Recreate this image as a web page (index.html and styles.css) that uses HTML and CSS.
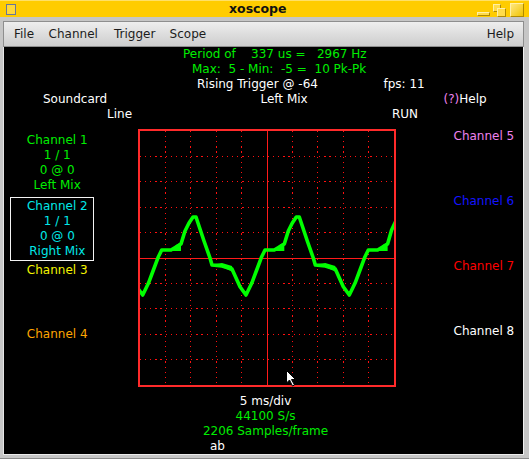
FILE: index.html
```html
<!DOCTYPE html>
<html>
<head>
<meta charset="utf-8">
<link rel="stylesheet" href="styles.css">
</head>
<body>
<div class="window">
  <div class="titlebar">
    <div class="menu-icon"></div>
    <div class="title">xoscope</div>
    <div class="tb-min"></div>
    <div class="tb-max"><span class="sq sq1"></span><span class="sq sq2"></span></div>
    <div class="tb-close"></div>
  </div>
  <div class="frame">
    <div class="menubar">
      <span class="mi">File</span>
      <span class="mi">Channel</span>
      <span class="mi">Trigger</span>
      <span class="mi">Scope</span>
      <span class="mi">Help</span>
    </div>
    <div class="screen">
      <div class="header">
        <div class="hl l1 green">Period of    337 us =   2967 Hz</div>
        <div class="hl l2 green">Max:  5 - Min:  -5 =  10 Pk-Pk</div>
        <div class="hl l3"><span>Rising Trigger @ -64</span><span>fps: 11</span></div>
        <div class="hl l4"><span>Soundcard</span><span>Left Mix</span><span><span class="violet">(?)</span>Help</span></div>
        <div class="hl l5"><span>Line</span><span>RUN</span></div>
      </div>
      <div class="main">
        <div class="left">
          <div class="chgroup green">
            <div>Channel 1</div><div>1 / 1</div><div>0 @ 0</div><div>Left Mix</div>
          </div>
          <div class="chbox cyan">
            <div>Channel 2</div><div>1 / 1</div><div>0 @ 0</div><div>Right Mix</div>
          </div>
          <div class="ch3 yellow">Channel 3</div>
          <div class="ch4 orange">Channel 4</div>
        </div>
        <div class="graph">
          <svg class="scope" width="258" height="258" viewBox="0 0 258 258">
            <defs>
              <clipPath id="inner"><rect x="2" y="2" width="254" height="254"/></clipPath>
            </defs>
            <g stroke="#ff1010" stroke-width="1" stroke-dasharray="1.2 3.92" shape-rendering="crispEdges">
              <line x1="2" y1="27.5" x2="257" y2="27.5"/>
              <line x1="2" y1="52.5" x2="257" y2="52.5"/>
              <line x1="2" y1="78.5" x2="257" y2="78.5"/>
              <line x1="2" y1="103.5" x2="257" y2="103.5"/>
              <line x1="2" y1="154.5" x2="257" y2="154.5"/>
              <line x1="2" y1="179.5" x2="257" y2="179.5"/>
              <line x1="2" y1="205.5" x2="257" y2="205.5"/>
              <line x1="2" y1="230.5" x2="257" y2="230.5"/>
              <line y1="2" x1="27.5" y2="257" x2="27.5"/>
              <line y1="2" x1="52.5" y2="257" x2="52.5"/>
              <line y1="2" x1="78.5" y2="257" x2="78.5"/>
              <line y1="2" x1="103.5" y2="257" x2="103.5"/>
              <line y1="2" x1="154.5" y2="257" x2="154.5"/>
              <line y1="2" x1="179.5" y2="257" x2="179.5"/>
              <line y1="2" x1="205.5" y2="257" x2="205.5"/>
              <line y1="2" x1="230.5" y2="257" x2="230.5"/>
            </g>
            <g stroke="#ff1a1a" stroke-width="1" shape-rendering="crispEdges">
              <line x1="2" y1="129.5" x2="256" y2="129.5"/>
              <line x1="129.5" y1="2" x2="129.5" y2="256"/>
            </g>
            <g clip-path="url(#inner)">
              <polyline fill="none" stroke="#00ff00" stroke-width="3.6" stroke-linejoin="round"
                points="-1.3,157.7 4.7,166 10.4,154.3 15.4,141 20.4,127.7 23.7,121
                24,121 33,121 38,118 43,115 47,102 51,94 55,88 58,88 62,100 66,112 72,129 74,136 84,137 94,140 102,157.7 108,166 113.7,154.3 118.7,141 123.7,127.7 127,121
                136.3,121 141.3,118 146.3,115 150.3,102 154.3,94 158.3,88 161.3,88 165.3,100 169.3,112 175.3,129 177.3,136 187.3,137 197.3,140 205.3,157.7 211.3,166 217,154.3 222,141 227,127.7 230.3,121
                239.6,121 244.6,118 249.6,115 253.6,101 256.9,94 260,88"/>
              <polygon fill="#00ff00" points="33,122 43,122 43,113 38,116"/>
              <polygon fill="#00ff00" points="136.3,122 146.3,122 146.3,113 141.3,116"/>
              <polygon fill="#00ff00" points="239.6,122 249.6,122 249.6,113 244.6,116"/>
              <polygon fill="#00ff00" points="76,135 84,134 94,137 95,143 86,139"/>
              <polygon fill="#00ff00" points="179.3,135 187.3,134 197.3,137 198.3,143 189.3,139"/>
            </g>
            <rect x="1" y="1" width="256" height="256" fill="none" stroke="#ff2a2a" stroke-width="2"/>
          </svg>
          <svg class="cursor" width="11" height="17" viewBox="0 0 11 17">
            <path d="M0.5 0.5 V13 L3.5 10 L6.5 16 L8.5 15 L5.5 9.5 H9.5 Z" fill="#fff" stroke="#000" stroke-width="1"/>
          </svg>
        </div>
        <div class="right">
          <div class="rch violet">Channel 5</div>
          <div class="rch blue">Channel 6</div>
          <div class="rch red">Channel 7</div>
          <div class="rch white">Channel 8</div>
        </div>
      </div>
      <div class="footer">
        <div class="fl white">5 ms/div</div>
        <div class="fl green">44100 S/s</div>
        <div class="fl green">2206 Samples/frame</div>
        <div class="fl ab white">ab</div>
      </div>
    </div>
  </div>
</div>
</body>
</html>
```
FILE: styles.css
```css
html, body {
  margin: 0;
  padding: 0;
}
body {
  width: 529px;
  height: 459px;
  overflow: hidden;
  background: #c4c4c4;
  font-family: "DejaVu Sans", sans-serif;
  font-size: 12px;
}
.window {
  display: flex;
  flex-direction: column;
  height: 459px;
}
.titlebar {
  height: 17px;
  background: #ffcc00;
  border-top: 1px solid #ffe066;
  box-sizing: border-box;
  display: flex;
  align-items: flex-start;
}
.menu-icon {
  width: 10px;
  height: 11px;
  margin: 3px 0 0 6px;
  box-sizing: border-box;
  border: 1px solid #69759a;
  background: #ffd83a;
}
.title {
  margin-left: 213px;
  font-weight: bold;
  font-size: 12.5px;
  line-height: 16px;
  color: #111;
}
.tb-min {
  margin: 11px 0 0 auto;
  width: 13px;
  height: 4px;
  box-sizing: border-box;
  background: #ffdc4a;
  border: 1px solid;
  border-color: #fff0a8 #b08a00 #b08a00 #fff0a8;
}
.tb-max {
  position: relative;
  width: 13px;
  height: 13px;
  margin: 3px 0 0 3px;
}
.sq {
  position: absolute;
  box-sizing: border-box;
  background: #ffdc4a;
  border: 1px solid;
  border-color: #fff0a8 #b08a00 #b08a00 #fff0a8;
}
.sq1 { left: 0; top: 0; width: 8px; height: 8px; }
.sq2 { left: 4px; top: 4px; width: 9px; height: 9px; }
.tb-close {
  width: 14px;
  height: 14px;
  margin: 2px 5px 0 4px;
  box-sizing: border-box;
  background: linear-gradient(135deg, #ffe680, #f0c400);
  border: 1px solid;
  border-color: #fff0a8 #b08a00 #b08a00 #fff0a8;
}
.frame {
  flex: 1;
  display: flex;
  flex-direction: column;
  padding: 4px 5px 3px 3px;
  background: #c6c6c6;
  border-bottom: 1px solid #8a8a8a;
}
.menubar {
  height: 26px;
  box-sizing: border-box;
  border: 1px solid #8e8e8e;
  background: linear-gradient(#eeeeee, #cdcdcd);
  display: grid;
  grid-template-columns: 34.6px 65.4px 55.6px 1fr auto;
  align-items: center;
  padding: 0 9px 0 10px;
  color: #1c1c1c;
}
.screen {
  flex: 1;
  background: #000;
  border-left: 1px solid #e6e6e6;
  border-right: 1px solid #f0f0f0;
  border-bottom: 1px solid #ececec;
  display: flex;
  flex-direction: column;
  color: #fff;
}
.header {
  height: 75px;
}
.hl {
  height: 15px;
  line-height: 15px;
  white-space: pre;
  display: grid;
}
.l1 { padding-left: 179px; }
.l2 { padding-left: 188px; }
.l3 { padding-left: 193px; grid-template-columns: 186.5px auto; }
.l4 { padding-left: 39px; grid-template-columns: 217.5px 183px auto; }
.l5 { padding-left: 103px; grid-template-columns: 285px auto; }
.main {
  display: flex;
  height: 265px;
}
.left {
  width: 134px;
  box-sizing: border-box;
  padding: 10.5px 27.6px 0 0;
  text-align: center;
  line-height: 15px;
  white-space: nowrap;
}
.chbox {
  margin: 4.8px 0 0 6px;
  width: 84px;
  box-sizing: border-box;
  border: 1px solid #f4f4f4;
  padding: 0.5px 0 1.5px 10.7px;
}
.ch3 { margin-top: 2px; }
.ch4 { margin-top: 49.2px; }
.graph {
  position: relative;
  width: 258px;
  height: 258px;
  margin-top: 7px;
}
.scope { display: block; }
.cursor {
  position: absolute;
  left: 148px;
  top: 241px;
}
.right {
  flex: 1;
  padding: 6.5px 0 0 57.5px;
  line-height: 15px;
  white-space: nowrap;
}
.rch { height: 15px; margin-bottom: 50px; }
.footer {
  padding: 7px 0 0 4px;
  line-height: 15px;
  text-align: center;
}
.fl { height: 15px; }
.ab { text-align: left; padding-left: 202px; }
.green { color: #00ee00; }
.cyan { color: #00e8e8; }
.yellow { color: #f4f400; }
.orange { color: #ffa500; }
.violet { color: #ee82ee; }
.blue { color: #1414ff; }
.red { color: #ff0000; }
.white { color: #ffffff; }
```
